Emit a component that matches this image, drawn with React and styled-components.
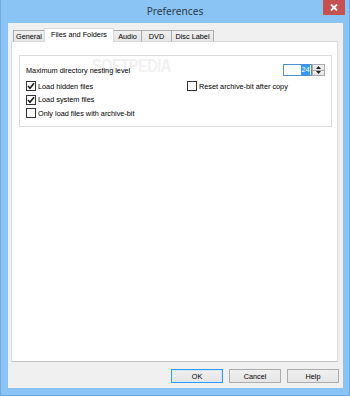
import styled, { createGlobalStyle } from "styled-components";

const GlobalStyle = createGlobalStyle`
	html, body {
		margin: 0;
		padding: 0;
		background: #8ac4f5;
	}

	* {
		box-sizing: border-box;
	}
`;

const tabs = [
	{ label: "General", width: 32 },
	{ label: "Files and Folders", width: 70, active: true },
	{ label: "Audio", width: 29 },
	{ label: "DVD", width: 31 },
	{ label: "Disc Label", width: 43 },
];

const Check = ({ checked, children }) => (
	<CheckRow>
		<CheckBox>
			{checked && (
				<svg width="8" height="8" viewBox="0 0 8 8">
					<path d="M1 4 L3 6.2 L7 1.2" fill="none" stroke="#1a1a1a" strokeWidth="1.6" />
				</svg>
			)}
		</CheckBox>
		<span>{children}</span>
	</CheckRow>
);

const App = () => {
	return (
		<Window>
			<GlobalStyle />
			<TitleBar>
				<span />
				<Title>Preferences</Title>
				<CloseButton>
					<svg width="8" height="7" viewBox="0 0 8 7">
						<path d="M1 0.5 L7 6.5 M7 0.5 L1 6.5" stroke="#fff" strokeWidth="1.8" />
					</svg>
				</CloseButton>
			</TitleBar>

			<Client>
				<TabStrip>
					{tabs.map((tab) => (
						<Tab key={tab.label} $width={tab.width} $active={tab.active}>
							{tab.label}
						</Tab>
					))}
				</TabStrip>

				<Panel>
					<Watermark>SOFTPEDIA</Watermark>
					<GroupBox>
						<HeaderRow>
							<Label>Maximum directory nesting level</Label>
							<Spin>
								<SpinInput>
									<Selected>24</Selected>
								</SpinInput>
								<SpinButtons>
									<SpinButton>
										<svg width="5" height="3" viewBox="0 0 5 3">
											<path d="M0 3 L2.5 0 L5 3 Z" fill="#222" />
										</svg>
									</SpinButton>
									<SpinButton>
										<svg width="5" height="3" viewBox="0 0 5 3">
											<path d="M0 0 L2.5 3 L5 0 Z" fill="#222" />
										</svg>
									</SpinButton>
								</SpinButtons>
							</Spin>
						</HeaderRow>

						<Options>
							<Column $width={161}>
								<Check checked>Load hidden files</Check>
								<Check checked>Load system files</Check>
								<Check>Only load files with archive-bit</Check>
							</Column>
							<Column>
								<Check>Reset archive-bit after copy</Check>
							</Column>
						</Options>
					</GroupBox>
				</Panel>

				<ButtonRow>
					<Button $default>OK</Button>
					<Button>Cancel</Button>
					<Button>Help</Button>
				</ButtonRow>
			</Client>
		</Window>
	);
};

const Window = styled.div`
	width: 350px;
	height: 396px;
	display: flex;
	flex-direction: column;
	background: #8ac4f5;
	border: 1px solid #6da8de;
	border-top: none;
	font-family: "Liberation Sans", Arial, sans-serif;
	font-size: 7.3px;
	color: #000;
`;

const TitleBar = styled.div`
	height: 23px;
	flex-shrink: 0;
	display: grid;
	grid-template-columns: 1fr auto 1fr;
	align-items: start;
`;

const Title = styled.div`
	margin-top: 4px;
	font-family: "Noto Sans", "Open Sans", sans-serif;
	font-size: 10.2px;
	line-height: 14px;
	color: #2f3b46;
`;

const CloseButton = styled.div`
	justify-self: end;
	width: 22px;
	height: 15px;
	margin-right: 4px;
	background: #c75050;
	display: flex;
	align-items: center;
	justify-content: center;
`;

const Client = styled.div`
	flex: 1;
	margin: 0 6px 7px 7px;
	padding: 5px 5px 5px 3px;
	background: #f0f0f0;
	display: flex;
	flex-direction: column;
`;

const TabStrip = styled.div`
	height: 13px;
	margin-left: 2px;
	display: flex;
	align-items: flex-end;
	position: relative;
	z-index: 1;
`;

const Tab = styled.div`
	width: ${(p) => p.$width}px;
	height: ${(p) => (p.$active ? 14 : 11)}px;
	margin-bottom: ${(p) => (p.$active ? -1 : 0)}px;
	padding-bottom: ${(p) => (p.$active ? 2 : 0)}px;
	display: flex;
	align-items: center;
	justify-content: center;
	white-space: nowrap;
	border: 1px solid ${(p) => (p.$active ? "#d9d9d9" : "#acacac")};
	border-bottom: none;
	background: ${(p) => (p.$active ? "#fff" : "linear-gradient(#f0f0f0, #e5e5e5)")};
	position: relative;
	z-index: ${(p) => (p.$active ? 2 : 1)};

	& + & {
		margin-left: -1px;
	}
`;

const Panel = styled.div`
	flex: 1;
	position: relative;
	background: #fff;
	border: 1px solid #d9d9d9;
	border-bottom-color: #c2c2c2;
	padding: 13px 5px 0 7px;
`;

const Watermark = styled.div`
	position: absolute;
	left: 80px;
	top: 14px;
	font-size: 18px;
	font-weight: bold;
	letter-spacing: -0.5px;
	color: #f1f1f1;
	transform: scaleX(0.8);
	transform-origin: left top;
	pointer-events: none;
`;

const GroupBox = styled.div`
	position: relative;
	height: 72px;
	border: 1px solid #dcdcdc;
	padding: 8px 6px 0 6px;
`;

const HeaderRow = styled.div`
	height: 12px;
	display: flex;
	align-items: center;
	justify-content: space-between;
`;

const Label = styled.span`
	white-space: nowrap;
`;

const Spin = styled.div`
	display: flex;
	height: 12px;
`;

const SpinInput = styled.div`
	width: 29px;
	height: 12px;
	border: 1px solid #4d8fd1;
	background: #fff;
	display: flex;
	align-items: center;
	justify-content: flex-end;
	padding-right: 1px;
`;

const Selected = styled.span`
	background: #3399ff;
	color: #fff;
	height: 10px;
	line-height: 10px;
	padding: 0 0.5px;
`;

const SpinButtons = styled.div`
	width: 13px;
	display: flex;
	flex-direction: column;
`;

const SpinButton = styled.div`
	flex: 1;
	display: flex;
	align-items: center;
	justify-content: center;
	background: linear-gradient(#f2f2f2, #e2e2e2);
	border: 1px solid #acacac;

	& + & {
		border-top: none;
	}
`;

const Options = styled.div`
	display: flex;
	margin-top: 3.5px;
`;

const Column = styled.div`
	width: ${(p) => (p.$width ? `${p.$width}px` : "auto")};
	display: flex;
	flex-direction: column;
`;

const CheckRow = styled.div`
	height: 13.5px;
	display: flex;
	align-items: center;
	gap: 2px;
	white-space: nowrap;
`;

const CheckBox = styled.div`
	width: 10px;
	height: 10px;
	border: 1px solid #333;
	background: #fff;
	display: flex;
	align-items: center;
	justify-content: center;
`;

const ButtonRow = styled.div`
	margin-top: 7px;
	margin-right: -1px;
	height: 14px;
	display: flex;
	justify-content: flex-end;
	gap: 6px;
`;

const Button = styled.div`
	width: 52px;
	height: 14px;
	display: flex;
	align-items: center;
	justify-content: center;
	border: 1px solid ${(p) => (p.$default ? "#3399ff" : "#acacac")};
	background: linear-gradient(#f0f0f0, #e5e5e5);
	box-shadow: ${(p) => (p.$default ? "inset 0 0 0 1px #d3e9ff" : "none")};
`;

export default App;
